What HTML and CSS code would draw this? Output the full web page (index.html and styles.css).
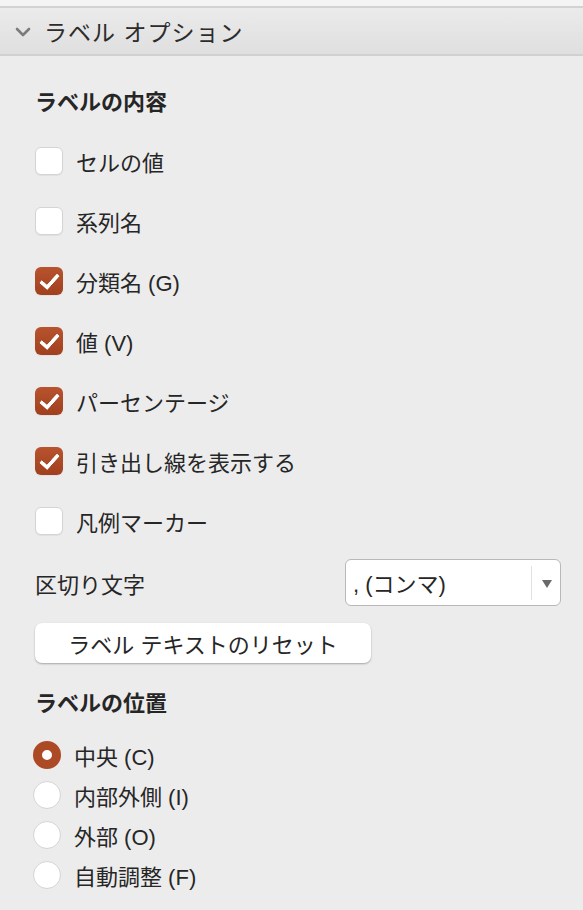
FILE: index.html
```html
<!DOCTYPE html>
<html lang="ja">
<head>
    <meta charset="UTF-8">
    <meta name="viewport" content="width=device-width, initial-scale=1.0">
    <title>ラベル オプション</title>
    <link rel="stylesheet" href="styles.css">
</head>
<body>
    <div class="top-strip"></div>
    <header class="section-header">
        <svg class="chevron" width="16" height="10" viewBox="0 0 16 10">
            <path d="M2 2 L8 8 L14 2" fill="none" stroke="#7c7c7c" stroke-width="2.6" stroke-linecap="round" stroke-linejoin="round"/>
        </svg>
        <span>ラベル オプション</span>
    </header>

    <main class="panel">
        <h2 class="group-title">ラベルの内容</h2>

        <div class="checks">
            <label class="check-row"><span class="box"></span>セルの値</label>
            <label class="check-row"><span class="box"></span>系列名</label>
            <label class="check-row"><span class="box on"></span>分類名 (G)</label>
            <label class="check-row"><span class="box on"></span>値 (V)</label>
            <label class="check-row"><span class="box on"></span>パーセンテージ</label>
            <label class="check-row"><span class="box on"></span>引き出し線を表示する</label>
            <label class="check-row"><span class="box"></span>凡例マーカー</label>
        </div>

        <div class="separator-row">
            <span>区切り文字</span>
            <div class="select">
                <span class="select-value">, (コンマ)</span>
                <span class="select-arrow"></span>
            </div>
        </div>

        <button class="reset-btn">ラベル テキストのリセット</button>

        <h2 class="group-title pos-title">ラベルの位置</h2>

        <div class="radios">
            <label class="radio-row"><span class="dot on"></span>中央 (C)</label>
            <label class="radio-row"><span class="dot"></span>内部外側 (I)</label>
            <label class="radio-row"><span class="dot"></span>外部 (O)</label>
            <label class="radio-row"><span class="dot"></span>自動調整 (F)</label>
        </div>
    </main>
</body>
</html>
```

FILE: styles.css
```css
* {
    margin: 0;
    padding: 0;
    box-sizing: border-box;
}

body {
    font-family: "Liberation Sans", "Noto Sans CJK JP", sans-serif;
    background-color: #ececec;
    color: #262626;
    width: 583px;
    height: 910px;
    overflow: hidden;
}

.top-strip {
    height: 8px;
    background-color: #f4f4f4;
    border-bottom: 2px solid #d2d2d2;
}

.section-header {
    display: flex;
    align-items: center;
    height: 48px;
    padding-left: 15px;
    background: linear-gradient(#ebebeb, #dfdfdf);
    border-bottom: 2px solid #d0d0d0;
    font-size: 23px;
    letter-spacing: 1px;
    color: #2c2c2c;
}

.chevron {
    margin-right: 13px;
    margin-top: 2px;
}

.panel {
    padding: 0 22px 0 35px;
}

.group-title {
    font-size: 22px;
    font-weight: bold;
    height: 30px;
    line-height: 30px;
    margin-top: 32px;
}

.checks {
    display: flex;
    flex-direction: column;
    gap: 32px;
    margin-top: 29px;
}

.check-row {
    display: flex;
    align-items: center;
    height: 28px;
    font-size: 22px;
}

.box {
    width: 28px;
    height: 28px;
    margin-right: 13px;
    border-radius: 6px;
    background-color: #fff;
    border: 1px solid #d4d4d4;
    box-shadow: 0 1px 1px rgba(0, 0, 0, 0.06);
    position: relative;
}

.box.on {
    border: none;
    background: linear-gradient(#b8532e, #a1401e);
}

.box.on::after {
    content: "";
    position: absolute;
    left: 9px;
    top: 3px;
    width: 7px;
    height: 15px;
    border-right: 4px solid #fff;
    border-bottom: 4px solid #fff;
    border-radius: 1px;
    transform: rotate(42deg);
}

.separator-row {
    display: flex;
    justify-content: space-between;
    align-items: center;
    margin-top: 24px;
    font-size: 22px;
}

.select {
    display: flex;
    align-items: center;
    width: 216px;
    height: 47px;
    background-color: #fff;
    border: 1px solid #b8b8b8;
    border-radius: 6px;
}

.select-value {
    flex: 1;
    padding-left: 7px;
    padding-bottom: 2px;
}

.select-arrow {
    width: 29px;
    height: 34px;
    border-left: 1px solid #e0e0e0;
    position: relative;
}

.select-arrow::after {
    content: "";
    position: absolute;
    left: 10px;
    top: 14px;
    border-left: 5px solid transparent;
    border-right: 5px solid transparent;
    border-top: 8px solid #6a6a6a;
}

.reset-btn {
    display: block;
    width: 336px;
    height: 40px;
    margin-top: 17px;
    background-color: #fff;
    border: none;
    border-radius: 7px;
    box-shadow: 0 1px 2px rgba(0, 0, 0, 0.3);
    font-family: inherit;
    font-size: 22px;
    color: #262626;
}

.pos-title {
    margin-top: 26px;
}

.radios {
    display: flex;
    flex-direction: column;
    gap: 12px;
    margin-top: 22px;
    margin-left: -2px;
}

.radio-row {
    display: flex;
    align-items: center;
    height: 28px;
    font-size: 22px;
}

.dot {
    width: 28px;
    height: 28px;
    margin-right: 13px;
    border-radius: 50%;
    background-color: #fff;
    border: 1px solid #d4d4d4;
}

.dot.on {
    border: 9px solid #ad4a26;
    background-color: #fff;
}
```
